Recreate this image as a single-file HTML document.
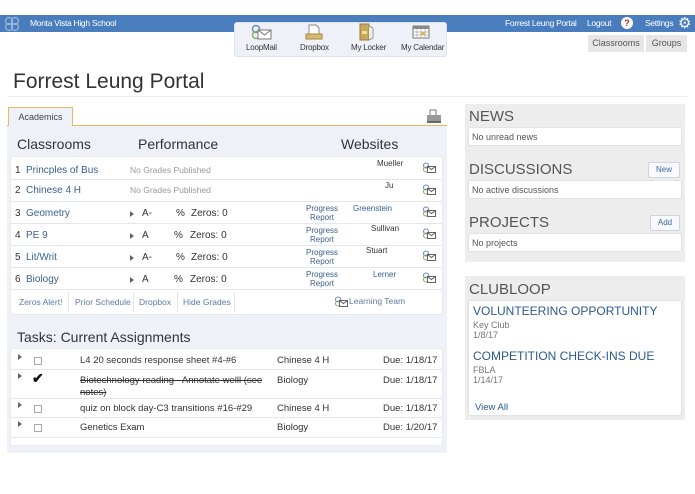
<!DOCTYPE html>
<html><head><meta charset="utf-8"><style>
*{box-sizing:border-box;margin:0;padding:0}
body{width:695px;height:494px;background:#fff;font-family:"Liberation Sans",sans-serif;position:relative;overflow:hidden;color:#333}
.a{position:absolute;white-space:nowrap}
.bar{left:0;top:15px;width:695px;height:17px;background:#4a7dbd}
.w{color:#fff;font-size:8.5px;letter-spacing:-0.3px}
.tb{left:234px;top:22px;width:213px;height:35px;background:#eef2f8;border:1px solid #dde3ec;border-radius:3px}
.tl{font-size:8px;color:#333;letter-spacing:-0.2px}
.lk{color:#3a5f8f}
.gr{color:#999}
.row{position:absolute;left:10px;width:433px;border-bottom:1px solid #e3e7ed;font-size:10px}
.ic{width:14px;height:11px}
.tri{width:0;height:0;border-left:4px solid #666;border-top:3px solid transparent;border-bottom:3px solid transparent}
.cb{width:8px;height:8px;border:1px solid #aaa;background:#fff}
.btn{position:absolute;background:#f7f9fc;border:1px solid #ccd5e0;border-radius:2px;color:#3a6aa0;font-size:8px;text-align:center;line-height:14px}
.h{font-size:15px;color:#555}
.wb{position:absolute;background:#fff;border:1px solid #e2e2e2;border-radius:2px}
</style></head><body>
<svg width="0" height="0" style="position:absolute"><defs><g id="lm"><circle cx="4" cy="3.5" r="2.5" fill="none" stroke="#6a8cc0" stroke-width="1.1"/><circle cx="4" cy="7.5" r="2.5" fill="none" stroke="#8ab060" stroke-width="1.1"/><rect x="5.5" y="4.5" width="8" height="6" fill="#fff" stroke="#555" stroke-width=".9"/><path d="M5.5 4.5l4 3 4-3" fill="none" stroke="#555" stroke-width=".9"/></g></defs></svg>
<div class="a bar"></div>
<svg class="a" style="left:4px;top:16px" width="16" height="16" viewBox="0 0 16 16"><g fill="none" stroke="#9bb6dd" stroke-width="1.3"><circle cx="5" cy="5" r="3.5"/><circle cx="11" cy="5" r="3.5"/><circle cx="5" cy="11" r="3.5"/><circle cx="11" cy="11" r="3.5"/></g></svg>
<div class="a w" style="left:30px;top:18px">Monta Vista High School</div>
<div class="a w" style="left:505px;top:18px">Forrest Leung Portal</div>
<div class="a w" style="left:587px;top:18px">Logout</div>
<div class="a" style="left:621px;top:17px;width:12px;height:12px;border-radius:6px;background:#fff;color:#c22;font-size:9px;font-weight:bold;text-align:center;line-height:12px">?</div>
<div class="a w" style="left:645px;top:18px">Settings</div>
<div class="a" style="left:678px;top:14px;color:#fff;font-size:15px">⚙</div>
<div class="a tb"></div>
<svg class="a" style="left:250px;top:24px" width="22" height="16"><circle cx="6" cy="5" r="3.5" fill="none" stroke="#6a8cc0" stroke-width="1.5"/><circle cx="6" cy="11" r="3.5" fill="none" stroke="#8ab060" stroke-width="1.5"/><rect x="8" y="6" width="13" height="9" fill="#fff" stroke="#777"/><path d="M8 6l6.5 5 6.5-5" fill="none" stroke="#777"/></svg>
<svg class="a" style="left:305px;top:24px" width="18" height="16"><path d="M4 1h7l3 3v8H4z" fill="#fff" stroke="#888"/><rect x="1" y="10" width="16" height="5" fill="#d9b870" stroke="#a98a40"/></svg>
<svg class="a" style="left:358px;top:23px" width="16" height="18"><rect x="2" y="1" width="9" height="16" fill="#c8a960" stroke="#9a7d3a"/><path d="M11 3l4 2v10l-4 2" fill="#eee" stroke="#999"/><rect x="4" y="8" width="5" height="3" fill="#f2e09a"/></svg>
<svg class="a" style="left:412px;top:25px" width="18" height="14"><rect x="1" y="1" width="16" height="12" fill="#fff" stroke="#777"/><rect x="1" y="1" width="16" height="3" fill="#888"/><path d="M1 7h16M1 10h16M5 4v9M9 4v9M13 4v9" stroke="#aaa" stroke-width=".7"/><rect x="9" y="7" width="4" height="3" fill="#e2b84a"/></svg>
<div class="a tl" style="left:246px;top:43px">LoopMail</div>
<div class="a tl" style="left:300px;top:43px">Dropbox</div>
<div class="a tl" style="left:351px;top:43px">My Locker</div>
<div class="a tl" style="left:401px;top:43px">My Calendar</div>
<div class="a" style="left:588px;top:35px;width:56px;height:17px;background:#e6e6e6;font-size:9px;color:#555;text-align:center;line-height:17px">Classrooms</div>
<div class="a" style="left:646px;top:35px;width:41px;height:17px;background:#e6e6e6;font-size:9px;color:#555;text-align:center;line-height:17px">Groups</div>
<div class="a" style="left:13px;top:70px;font-size:21px;color:#333">Forrest Leung Portal</div>
<div class="a" style="left:7px;top:96px;width:680px;height:1px;background:#eee"></div>
<div class="a" style="left:7px;top:125px;width:440px;height:328px;background:#eef2f8"></div>
<div class="a" style="left:7px;top:125px;width:440px;height:1px;background:#e8b960"></div>
<div class="a" style="left:8px;top:107px;width:65px;height:19px;background:#eef2f8;border:1px solid #e8b960;border-bottom:none;font-size:9px;color:#444;text-align:center;line-height:18px">Academics</div>
<svg class="a" style="left:426px;top:109px" width="16" height="14"><rect x="4" y="1" width="6" height="6" fill="#fff" stroke="#777"/><rect x="1" y="6" width="14" height="6" fill="#999"/><rect x="1" y="12" width="14" height="2" fill="#666"/></svg>
<div class="a h" style="left:17px;top:136px;color:#333;font-size:14px">Classrooms</div>
<div class="a h" style="left:138px;top:136px;color:#333;font-size:14px">Performance</div>
<div class="a h" style="left:341px;top:136px;color:#333;font-size:14px">Websites</div>
<div class="wb" style="left:10px;top:156px;width:433px;height:159px;border-color:#e6e9ee"></div>
<div class="row" style="top:158px;height:22px"><span class="a" style="left:5px;top:7px">1</span><span class="a lk" style="left:16px;top:7px">Princples of Bus</span><span class="a gr" style="left:120px;top:7px;font-size:8.5px">No Grades Published</span><span class="a" style="left:367px;top:1px;font-size:8px">Mueller</span></div>
<div class="row" style="top:180px;height:22px"><span class="a" style="left:5px;top:5px">2</span><span class="a lk" style="left:16px;top:5px">Chinese 4 H</span><span class="a gr" style="left:120px;top:5px;font-size:8.5px">No Grades Published</span><span class="a" style="left:375px;top:1px;font-size:8px">Ju</span></div>
<div class="row" style="top:202px;height:22px"><span class="a" style="left:5px;top:6px">3</span><span class="a lk" style="left:16px;top:6px">Geometry</span><span class="a" style="left:132px;top:6px">A-</span><span class="a" style="left:166px;top:6px">%</span><span class="a" style="left:181px;top:6px">Zeros: 0</span><span class="a lk" style="left:296px;top:2px;font-size:8px;text-align:center;line-height:9px">Progress<br>Report</span><span class="a lk" style="left:343px;top:2px;font-size:8px">Greenstein</span></div>
<div class="row" style="top:224px;height:22px"><span class="a" style="left:5px;top:6px">4</span><span class="a lk" style="left:16px;top:6px">PE 9</span><span class="a" style="left:132px;top:6px">A</span><span class="a" style="left:164px;top:6px">%</span><span class="a" style="left:180px;top:6px">Zeros: 0</span><span class="a lk" style="left:296px;top:2px;font-size:8px;text-align:center;line-height:9px">Progress<br>Report</span><span class="a" style="left:361px;top:0px;font-size:8px">Sullivan</span></div>
<div class="row" style="top:246px;height:22px"><span class="a" style="left:5px;top:6px">5</span><span class="a lk" style="left:16px;top:6px">Lit/Writ</span><span class="a" style="left:132px;top:6px">A-</span><span class="a" style="left:166px;top:6px">%</span><span class="a" style="left:181px;top:6px">Zeros: 0</span><span class="a lk" style="left:296px;top:2px;font-size:8px;text-align:center;line-height:9px">Progress<br>Report</span><span class="a" style="left:356px;top:0px;font-size:8px">Stuart</span></div>
<div class="row" style="top:268px;height:22px"><span class="a" style="left:5px;top:6px">6</span><span class="a lk" style="left:16px;top:6px">Biology</span><span class="a" style="left:132px;top:6px">A</span><span class="a" style="left:164px;top:6px">%</span><span class="a" style="left:180px;top:6px">Zeros: 0</span><span class="a lk" style="left:296px;top:2px;font-size:8px;text-align:center;line-height:9px">Progress<br>Report</span><span class="a lk" style="left:363px;top:2px;font-size:8px">Lerner</span></div>
<div class="a tri" style="left:130px;top:211px"></div><div class="a tri" style="left:130px;top:233px"></div><div class="a tri" style="left:130px;top:255px"></div><div class="a tri" style="left:130px;top:277px"></div>
<svg class="a ic" style="left:422px;top:162px"><use href="#lm"/></svg><svg class="a ic" style="left:422px;top:184px"><use href="#lm"/></svg><svg class="a ic" style="left:422px;top:206px"><use href="#lm"/></svg><svg class="a ic" style="left:422px;top:228px"><use href="#lm"/></svg><svg class="a ic" style="left:422px;top:250px"><use href="#lm"/></svg><svg class="a ic" style="left:422px;top:272px"><use href="#lm"/></svg><svg class="a ic" style="left:334px;top:296px"><use href="#lm"/></svg>
<div class="a lk" style="left:19px;top:297px;font-size:8.5px;color:#5a7aa6">Zeros Alert!</div>
<div class="a" style="left:68px;top:292px;width:1px;height:20px;background:#e5e5e5"></div>
<div class="a lk" style="left:75px;top:297px;font-size:8.5px;color:#5a7aa6">Prior Schedule</div>
<div class="a" style="left:133px;top:292px;width:1px;height:20px;background:#e5e5e5"></div>
<div class="a lk" style="left:139px;top:297px;font-size:8.5px;color:#5a7aa6">Dropbox</div>
<div class="a" style="left:177px;top:292px;width:1px;height:20px;background:#e5e5e5"></div>
<div class="a lk" style="left:183px;top:297px;font-size:8.5px;color:#5a7aa6">Hide Grades</div>
<div class="a" style="left:234px;top:292px;width:1px;height:20px;background:#e5e5e5"></div>
<div class="a lk" style="left:349px;top:296px;font-size:8.5px;color:#5a7aa6">Learning Team</div>
<div class="a" style="left:17px;top:329px;font-size:14px;color:#333">Tasks: Current Assignments</div>
<div class="wb" style="left:10px;top:348px;width:433px;height:98px;border-color:#e6e9ee"></div>
<div class="row" style="top:351px;height:19px;font-size:9.5px"><div class="a tri" style="left:8px;top:3px"></div><div class="a cb" style="left:24px;top:6px"></div><span class="a" style="left:70px;top:4px">L4 20 seconds response sheet #4-#6</span><span class="a" style="left:267px;top:4px">Chinese 4 H</span><span class="a" style="left:373px;top:4px">Due: 1/18/17</span></div>
<div class="row" style="top:370px;height:29px;font-size:9.5px"><div class="a tri" style="left:8px;top:3px"></div><span class="a" style="left:22px;top:0px;font-size:14px;font-weight:bold;color:#111">✔</span><span class="a" style="left:70px;top:5px;text-decoration:line-through;line-height:12px">Biotechnology reading - Annotate welll (see<br>notes)</span><span class="a" style="left:267px;top:5px">Biology</span><span class="a" style="left:373px;top:5px">Due: 1/18/17</span></div>
<div class="row" style="top:399px;height:19px;font-size:9.5px"><div class="a tri" style="left:8px;top:3px"></div><div class="a cb" style="left:24px;top:6px"></div><span class="a" style="left:70px;top:4px">quiz on block day-C3 transitions #16-#29</span><span class="a" style="left:267px;top:4px">Chinese 4 H</span><span class="a" style="left:373px;top:4px">Due: 1/18/17</span></div>
<div class="row" style="top:418px;height:20px;font-size:9.5px"><div class="a tri" style="left:8px;top:3px"></div><div class="a cb" style="left:24px;top:6px"></div><span class="a" style="left:70px;top:4px">Genetics Exam</span><span class="a" style="left:267px;top:4px">Biology</span><span class="a" style="left:373px;top:4px">Due: 1/20/17</span></div>
<div class="a" style="left:465px;top:104px;width:220px;height:158px;background:#ededed"></div>
<div class="a h" style="left:469px;top:108px">NEWS</div>
<div class="wb" style="left:468px;top:127px;width:214px;height:19px"></div>
<div class="a" style="left:472px;top:132px;font-size:9px;color:#555">No unread news</div>
<div class="a h" style="left:469px;top:161px">DISCUSSIONS</div>
<div class="btn" style="left:648px;top:162px;width:32px;height:16px">New</div>
<div class="wb" style="left:468px;top:180px;width:214px;height:19px"></div>
<div class="a" style="left:472px;top:185px;font-size:9px;color:#555">No active discussions</div>
<div class="a h" style="left:469px;top:214px">PROJECTS</div>
<div class="btn" style="left:650px;top:215px;width:30px;height:16px">Add</div>
<div class="wb" style="left:468px;top:233px;width:214px;height:19px"></div>
<div class="a" style="left:472px;top:238px;font-size:9px;color:#555">No projects</div>
<div class="a" style="left:465px;top:276px;width:220px;height:144px;background:#ededed"></div>
<div class="a h" style="left:469px;top:281px">CLUBLOOP</div>
<div class="wb" style="left:468px;top:300px;width:214px;height:116px"></div>
<div class="a" style="left:473px;top:304px;font-size:12px;color:#2a5a90">VOLUNTEERING OPPORTUNITY</div>
<div class="a" style="left:473px;top:320px;font-size:9px;color:#777">Key Club</div>
<div class="a" style="left:473px;top:330px;font-size:9px;color:#777">1/8/17</div>
<div class="a" style="left:473px;top:349px;font-size:12px;color:#2a5a90">COMPETITION CHECK-INS DUE</div>
<div class="a" style="left:473px;top:365px;font-size:9px;color:#777">FBLA</div>
<div class="a" style="left:473px;top:375px;font-size:9px;color:#777">1/14/17</div>
<div class="a" style="left:475px;top:402px;font-size:9.5px;color:#2a5a90">View All</div>
</body></html>
